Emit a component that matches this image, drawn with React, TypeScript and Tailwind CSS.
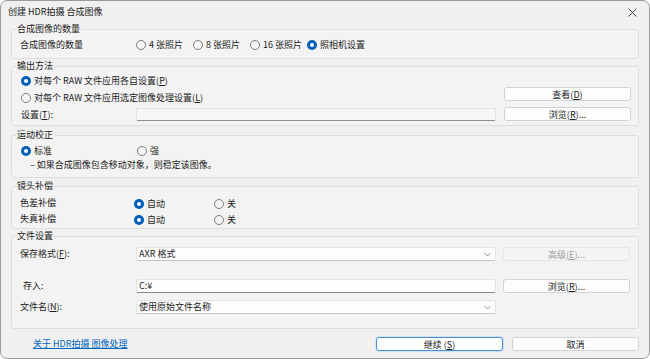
import React from "react";

const U = ({ c }: { c: string }) => <span className="underline">{c}</span>;

function Radio({ checked, label, className = "" }: { checked?: boolean; label: React.ReactNode; className?: string }) {
  return (
    <div className={`flex items-center gap-[3px] h-[14px] ${className}`}>
      {checked ? (
        <span className="w-[10px] h-[10px] rounded-full bg-[#005fb8] flex items-center justify-center shrink-0">
          <span className="w-[4px] h-[4px] rounded-full bg-white" />
        </span>
      ) : (
        <span className="w-[10px] h-[10px] rounded-full border border-[#7d7d7d] bg-[#f6f6f6] shrink-0" />
      )}
      <span className="whitespace-nowrap">{label}</span>
    </div>
  );
}

function Group({ title, children, className = "" }: { title: string; children: React.ReactNode; className?: string }) {
  return (
    <fieldset className={`border border-[#dedede] rounded-[3px] bg-[#f3f3f3] min-w-0 ${className}`}>
      <legend className="ml-[4px] px-[1px] leading-[12px]">{title}</legend>
      {children}
    </fieldset>
  );
}

function Button({ children, disabled, primary, className = "" }: { children: React.ReactNode; disabled?: boolean; primary?: boolean; className?: string }) {
  const look = disabled
    ? "bg-[#f5f5f5] border-[#e6e6e6] text-[#9d9d9d]"
    : primary
    ? "bg-[#fdfdfd] border-[#4a8fd4] ring-1 ring-[#cfe2f5]"
    : "bg-[#fdfdfd] border-[#d2d2d2]";
  return (
    <div className={`h-[14px] w-[127px] border rounded-[3px] flex items-center justify-center leading-none ${look} ${className}`}>
      {children}
    </div>
  );
}

function Chevron() {
  return (
    <svg width="7" height="5" viewBox="0 0 7 5" className="shrink-0">
      <path d="M0.5 1 L3.5 4 L6.5 1" fill="none" stroke="#777" strokeWidth="0.8" />
    </svg>
  );
}

function Select({ value }: { value: string }) {
  return (
    <div className="flex-1 h-[14px] bg-[#fdfdfd] border border-[#e3e3e3] border-b-[#c4c4c4] rounded-[2px] flex items-center justify-between pl-[2px] pr-[4px]">
      <span>{value}</span>
      <Chevron />
    </div>
  );
}

export default function App() {
  return (
    <div className="w-[650px] h-[359px] bg-white font-['Noto_Sans_CJK_SC',sans-serif] text-[9px] leading-[12px] text-[#1b1b1b]">
      <div className="w-full h-full bg-[#f0f0f0] border border-[#9a9a9a] rounded-[7px] flex flex-col overflow-hidden">
        {/* Title bar */}
        <div className="h-[22px] shrink-0 flex items-center justify-between pl-[7px] pr-[12px]">
          <span>创建 HDR拍摄 合成图像</span>
          <svg width="9" height="9" viewBox="0 0 9 9">
            <path d="M0.5 0.5 L8.5 8.5 M8.5 0.5 L0.5 8.5" stroke="#333" strokeWidth="0.9" />
          </svg>
        </div>

        <div className="flex flex-col px-[10px]">
          {/* 合成图像的数量 */}
          <Group title="合成图像的数量">
            <div className="flex items-center h-[14px] mt-[3px] mb-[6px] pl-[8px]">
              <span className="w-[116px]">合成图像的数量</span>
              <Radio className="w-[57px]" label="4 张照片" />
              <Radio className="w-[57px]" label="8 张照片" />
              <Radio className="w-[57px]" label="16 张照片" />
              <Radio checked label="照相机设置" />
            </div>
          </Group>

          {/* 输出方法 */}
          <Group title="输出方法" className="mt-[1px]">
            <div className="flex pl-[9px] pr-[7px] pt-[2px] pb-[4px] gap-[8px]">
              <div className="flex-1 flex flex-col gap-[3px]">
                <Radio checked label={<>对每个 RAW 文件应用各自设置(<U c="P" />)</>} />
                <Radio label={<>对每个 RAW 文件应用选定图像处理设置(<U c="L" />)</>} />
                <div className="flex items-center h-[13px]">
                  <span className="w-[115px]">设置(<U c="T" />):</span>
                  <div className="flex-1 h-[13px] bg-[#f6f6f6] border border-[#e4e4e4] border-b-[#8f8f8f] rounded-[2px]" />
                </div>
              </div>
              <div className="w-[127px] flex flex-col justify-end gap-[6px]">
                <Button>查看(<U c="D" />)</Button>
                <Button>浏览(<U c="R" />)...</Button>
              </div>
            </div>
          </Group>

          {/* 运动校正 */}
          <Group title="运动校正" className="mt-[3px]">
            <div className="flex flex-col pl-[9px] pt-[3px] pb-[6px]">
              <div className="flex items-center">
                <Radio checked className="w-[116px]" label="标准" />
                <Radio label="强" />
              </div>
              <div className="h-[12px] pl-[9px] mt-[1px]">– 如果合成图像包含移动对象，则稳定该图像。</div>
            </div>
          </Group>

          {/* 镜头补偿 */}
          <Group title="镜头补偿" className="mt-[2px]">
            <div className="flex flex-col gap-[2px] pl-[8px] pt-[5px] pb-[1px]">
              <div className="flex items-center">
                <span className="w-[114px] -mt-[2px]">色差补偿</span>
                <Radio checked className="w-[80px]" label="自动" />
                <Radio label="关" />
              </div>
              <div className="flex items-center">
                <span className="w-[114px] -mt-[2px]">失真补偿</span>
                <Radio checked className="w-[80px]" label="自动" />
                <Radio label="关" />
              </div>
            </div>
          </Group>

          {/* 文件设置 */}
          <Group title="文件设置" className="mt-[1px]">
            <div className="flex flex-col pl-[8px] pr-[8px] pt-[5px] pb-[14px]">
              <div className="flex items-center h-[14px] gap-[7px]">
                <div className="flex-1 flex items-center">
                  <span className="w-[116px]">保存格式(<U c="F" />):</span>
                  <Select value="AXR 格式" />
                </div>
                <Button disabled>高级(<U c="E" />)...</Button>
              </div>
              <div className="flex items-center h-[14px] gap-[7px] mt-[18px]">
                <div className="flex-1 flex items-center">
                  <span className="w-[116px] pl-[3px]">存入:</span>
                  <div className="flex-1 h-[14px] bg-[#fdfdfd] border border-[#e3e3e3] border-b-[#8a8a8a] rounded-[2px] flex items-center pl-[2px]">C:¥</div>
                </div>
                <Button>浏览(<U c="R" />)...</Button>
              </div>
              <div className="flex items-center h-[14px] gap-[7px] mt-[7px]">
                <div className="flex-1 flex items-center">
                  <span className="w-[116px]">文件名(<U c="N" />):</span>
                  <Select value="使用原始文件名称" />
                </div>
                <div className="w-[127px]" />
              </div>
            </div>
          </Group>

          {/* Bottom row */}
          <div className="flex items-center h-[14px] mt-[8px]">
            <span className="ml-[22px] text-[#0067c0] underline">关于 HDR拍摄 图像处理</span>
            <div className="flex-1" />
            <Button primary className="w-[126px]">继续 (<U c="S" />)</Button>
            <Button className="w-[126px] ml-[9px]">取消</Button>
          </div>
        </div>
      </div>
    </div>
  );
}
